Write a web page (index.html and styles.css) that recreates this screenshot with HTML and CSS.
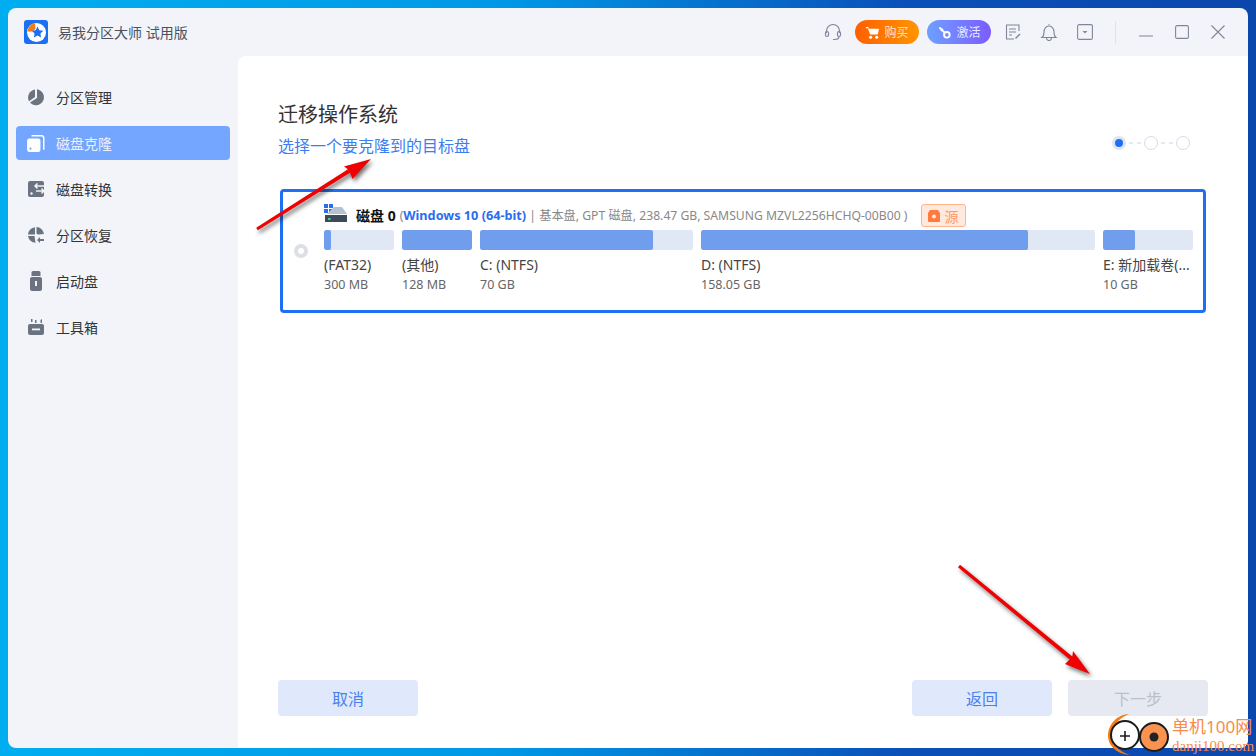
FILE: index.html
```html
<!DOCTYPE html>
<html lang="zh-CN">
<head>
    <meta charset="UTF-8">
    <title>易我分区大师 试用版</title>
    <link rel="stylesheet" href="styles.css">
</head>
<body>
    <div class="window">
        <header class="titlebar">
            <svg class="logo" viewBox="0 0 24 24">
                <rect width="24" height="24" rx="3" fill="#1b6ff2"/>
                <circle cx="12.5" cy="12.5" r="9.5" fill="#fff"/>
                <path d="M3.5 11.5A9.5 9.5 0 0 1 11 3.2L11.5 9 8 11.5Z" fill="#f57c14"/>
                <path d="M13.5 6.5l1.8 3.7 4 .5-2.9 2.8.7 4-3.6-1.9-3.6 1.9.7-4-2.9-2.8 4-.5Z" fill="#1b6ff2"/>
            </svg>
            <span class="app-name">易我分区大师 试用版</span>
            <div class="tools">
                <svg class="tool headset" viewBox="0 0 18 18" fill="none" stroke="#80869a" stroke-width="1.2">
                    <path d="M2.5 10V8a6.5 6.5 0 0 1 13 0v2"/>
                    <rect x="1.5" y="8.5" width="3" height="5" rx="1.5"/>
                    <rect x="13.5" y="8.5" width="3" height="5" rx="1.5"/>
                    <path d="M15 13.500c0 2-2 3-4.500 3H9"/>
                </svg>
                <div class="pill buy">
                    <svg viewBox="0 0 16 16" fill="#fff"><path d="M1 2h2.500l.6 2H15l-1.500 6H5.500L3 3.500H1Z"/><circle cx="6" cy="13" r="1.600"/><circle cx="12.500" cy="13" r="1.600"/></svg>
                    购买
                </div>
                <div class="pill activate">
                    <svg viewBox="0 0 16 16" fill="none" stroke="#fff" stroke-width="2"><circle cx="10.500" cy="10.500" r="3"/><path d="M8.500 8.500 2.500 2.500M4 6l2-2"/></svg>
                    激活
                </div>
                <svg class="tool note" viewBox="0 0 16 16" fill="none" stroke="#80869a" stroke-width="1.100">
                    <path d="M14 7V1H1.500v14H9"/><path d="M4 5h7M4 8h7M4 11h3"/><path d="M10 14l4.500-4.500 1 1L11 15Z" fill="#80869a" stroke="none"/>
                </svg>
                <svg class="tool bell" viewBox="0 0 18 18" fill="none" stroke="#80869a" stroke-width="1.100">
                    <path d="M2 14.500c1.500-1 2-2.500 2-5.500 0-3 2-6 5-6s5 3 5 6c0 3 .5 4.500 2 5.500Z"/><path d="M8.500 1.500h1"/><path d="M6.500 15a2.500 2.500 0 0 0 5 0"/>
                </svg>
                <svg class="tool menu" viewBox="0 0 16 16" fill="none" stroke="#80869a" stroke-width="1.100">
                    <rect x=".6" y=".6" width="14.800" height="14.800" rx="1.500"/><path d="M5.500 7h5L8 9.500Z" fill="#80869a" stroke="none"/>
                </svg>
                <span class="divider"></span>
                <svg class="win-btn" viewBox="0 0 14 14" fill="none" stroke="#80869a" stroke-width="1.100"><path d="M0 11h14"/></svg>
                <svg class="win-btn" viewBox="0 0 14 14" fill="none" stroke="#80869a" stroke-width="1.100"><rect x=".6" y=".6" width="12.800" height="12.800" rx="1.500"/></svg>
                <svg class="win-btn" viewBox="0 0 14 14" fill="none" stroke="#80869a" stroke-width="1.100"><path d="M.5.500l13 13M13.500.500l-13 13"/></svg>
            </div>
        </header>

        <div class="content">
            <nav class="sidebar">
                <a class="nav-item">
                    <svg viewBox="0 0 16 16" fill="#6b7280"><path d="M7 .6V8l-6 4.300A8 8 0 0 1 7 .6Z"/><path d="M9 .3a8 8 0 1 1-7 13.300L9 9Z"/></svg>
                    分区管理
                </a>
                <a class="nav-item active">
                    <svg viewBox="0 0 18 18" fill="#fff"><rect x="1" y="5" width="12" height="12" rx="2"/><path d="M5 2.500h9a2 2 0 0 1 2 2V15" fill="none" stroke="#fff" stroke-width="1.300"/><circle cx="4" cy="14" r="1" fill="#74a5ff"/></svg>
                    磁盘克隆
                </a>
                <a class="nav-item">
                    <svg viewBox="0 0 16 16"><path d="M2 0h12a2 2 0 0 1 2 2v12a2 2 0 0 1-2 2H2a2 2 0 0 1-2-2V2a2 2 0 0 1 2-2Z" fill="#6b7280"/><circle cx="3.500" cy="12.500" r="1.200" fill="#f2f4f9"/><path d="M7 5h9M16 10H8M9.500 2.500 7 5l2.500 2.500M13.500 7.500 16 10l-2.500 2.500" fill="none" stroke="#f2f4f9" stroke-width="1.500"/></svg>
                    磁盘转换
                </a>
                <a class="nav-item">
                    <svg viewBox="0 0 16 16" fill="#6b7280"><path d="M7 .2V7.500H0A8 8 0 0 1 7 .2Z"/><path d="M8.500 0A8 8 0 0 1 16 7l-6 .5-1.500-1Z"/><path d="M0 9h6.500l1 6.800A8 8 0 0 1 0 9Z"/><path d="M9 13l3-3v2h4v2h-4v2Z"/></svg>
                    分区恢复
                </a>
                <a class="nav-item">
                    <svg viewBox="2 0 12 20" fill="#6b7280"><path d="M5 0h6a1.500 1.500 0 0 1 1.500 1.500V5h-9V1.500A1.500 1.500 0 0 1 5 0Z"/><path d="M4 6h8a2 2 0 0 1 2 2v10a2 2 0 0 1-2 2H4a2 2 0 0 1-2-2V8a2 2 0 0 1 2-2Z"/><rect x="7" y="10" width="2" height="5" fill="#f2f4f9"/></svg>
                    启动盘
                </a>
                <a class="nav-item">
                    <svg viewBox="0 0 16 16" fill="#6b7280"><path d="M2 5h12a2 2 0 0 1 2 2v7a2 2 0 0 1-2 2H2a2 2 0 0 1-2-2V7a2 2 0 0 1 2-2Z"/><rect x="4" y="9.500" width="8" height="1.800" fill="#f2f4f9"/><path d="M3 0h1.500v3H3ZM7 1h1.500v3H7ZM12.500 1 14 0v4h-1.500Z"/></svg>
                    工具箱
                </a>
            </nav>

            <main class="main">
                <div class="page-head">
                    <div>
                        <h1 class="page-title">迁移操作系统</h1>
                        <p class="page-sub">选择一个要克隆到的目标盘</p>
                    </div>
                    <div class="steps">
                        <span class="step current"></span>
                        <span class="dash"></span>
                        <span class="step"></span>
                        <span class="dash"></span>
                        <span class="step"></span>
                    </div>
                </div>

                <section class="disk-card">
                    <span class="radio"></span>
                    <div class="disk-body">
                        <div class="disk-head">
                            <svg class="disk-icon" viewBox="0 0 24 19">
                                <rect x="0" y="0" width="4" height="4" fill="#2a6df0"/><rect x="5" y="0" width="4" height="4" fill="#2a6df0"/>
                                <rect x="0" y="5" width="4" height="4" fill="#2a6df0"/><rect x="5" y="5" width="4" height="4" fill="#2a6df0"/>
                                <path d="M10 3h8l5 7H3Z" fill="#b4c2d4"/>
                                <path d="M1 11h22v7H1Z" fill="#3c4a5c"/>
                                <rect x="4" y="14" width="2.500" height="2" fill="#3fd08a"/>
                            </svg>
                            <span class="disk-name">磁盘 0</span>
                            <span class="disk-info">(<b>Windows 10 (64-bit)</b> | 基本盘, GPT 磁盘, 238.47 GB, SAMSUNG MZVL2256HCHQ-00B00 )</span>
                            <span class="source-tag">
                                <svg viewBox="0 0 12 12"><path d="M2 0h8l2 3v8a1 1 0 0 1-1 1H1a1 1 0 0 1-1-1V3Z" fill="#ff7a3d"/><circle cx="6" cy="6.500" r="2" fill="#ffe9dc"/></svg>
                                源
                            </span>
                        </div>
                        <div class="partitions">
                            <div class="part" style="width: 70px">
                                <div class="bar"><div class="fill" style="width: 10%"></div></div>
                                <div class="part-name">(FAT32)</div>
                                <div class="part-size">300 MB</div>
                            </div>
                            <div class="part" style="width: 70px">
                                <div class="bar"><div class="fill" style="width: 100%"></div></div>
                                <div class="part-name">(其他)</div>
                                <div class="part-size">128 MB</div>
                            </div>
                            <div class="part" style="width: 213px">
                                <div class="bar"><div class="fill" style="width: 81%"></div></div>
                                <div class="part-name">C: (NTFS)</div>
                                <div class="part-size">70 GB</div>
                            </div>
                            <div class="part" style="width: 394px">
                                <div class="bar"><div class="fill" style="width: 83%"></div></div>
                                <div class="part-name">D: (NTFS)</div>
                                <div class="part-size">158.05 GB</div>
                            </div>
                            <div class="part" style="width: 90px">
                                <div class="bar"><div class="fill" style="width: 35%"></div></div>
                                <div class="part-name">E: 新加载卷(...</div>
                                <div class="part-size">10 GB</div>
                            </div>
                        </div>
                    </div>
                </section>

                <footer class="actions">
                    <button class="btn">取消</button>
                    <button class="btn back">返回</button>
                    <button class="btn disabled">下一步</button>
                </footer>
            </main>
        </div>
    </div>

    <!-- red arrows drawn over the screenshot -->
    <svg class="arrows" viewBox="0 0 1256 756">
        <path d="M256.200 227.700 348 169.300 344 166.500 371 159 352.500 179 350 172.700 257.800 230.300Z" fill="#f00000"/>
        <path d="M960 564.800 1072.300 656.500 1073 651 1090 674 1065 664 1069.700 659.500 958 567.200Z" fill="#f00000"/>
    </svg>

    <div class="watermark">
        <svg viewBox="0 0 64 42" class="wm-icon">
            <path d="M21 0C7 1 0 12 0 22c0 9 8 18 22 19-9-3-18-9-18-19C4 12 11 4 21 0Z" fill="#f57c14"/>
            <circle cx="17" cy="21" r="14" fill="#fff" stroke="#1b1b1b" stroke-width="2"/>
            <path d="M12 22h10M17 17v10" stroke="#1b1b1b" stroke-width="1.600"/>
            <circle cx="46" cy="23" r="14" fill="#f9934f" stroke="#1b1b1b" stroke-width="2"/>
            <circle cx="46" cy="23" r="4.500" fill="#222"/>
        </svg>
        <div class="wm-text">
            <div class="wm-cn">单机100网</div>
            <div class="wm-url">danji100.com</div>
        </div>
    </div>
</body>
</html>
```

FILE: styles.css
```css
body, html {
    margin: 0;
    padding: 0;
    height: 100%;
    overflow: hidden;
}

body {
    position: relative;
    background: linear-gradient(90deg, #00aef0, #0098e6 40%, #0a50b8 72%, #0a47ad);
    font-family: "Noto Sans", "Noto Sans CJK SC", sans-serif;
    color: #333;
}

.window {
    width: 1240px;
    height: 740px;
    margin: 8px;
    float: left;
    display: flex;
    flex-direction: column;
    background: #f2f4f9;
    border-radius: 8px;
    overflow: hidden;
}

/* title bar */
.titlebar {
    height: 48px;
    flex: none;
    display: flex;
    align-items: center;
    padding-left: 16px;
}

.logo {
    width: 24px;
    height: 24px;
    margin-right: 10px;
}

.app-name {
    font-size: 14px;
    color: #4a5160;
}

.tools {
    margin-left: auto;
    display: flex;
    align-items: center;
}

.tool {
    display: block;
}

.headset {
    width: 18px;
    height: 18px;
    margin-right: 13px;
}

.pill {
    width: 64px;
    height: 24px;
    border-radius: 12px;
    display: flex;
    align-items: center;
    justify-content: center;
    gap: 4px;
    font-size: 12px;
    margin-right: 8px;
}

.pill svg {
    width: 15px;
    height: 15px;
}

.buy {
    background: linear-gradient(90deg, #ff5f00, #ff9500);
    color: #ffe3cc;
}

.activate {
    background: linear-gradient(90deg, #6ea0ff, #7c5cff);
    color: #e4e8ff;
    margin-right: 14px;
}

.note {
    width: 16px;
    height: 16px;
    margin-right: 19px;
}

.bell {
    width: 18px;
    height: 18px;
    margin-right: 19px;
}

.menu {
    width: 16px;
    height: 16px;
    margin-right: 22px;
}

.divider {
    width: 1px;
    height: 23px;
    background: #e0e3ea;
    margin-right: 23px;
}

.win-btn {
    width: 14px;
    height: 14px;
    margin-right: 22px;
}

.win-btn:last-child {
    margin-right: 23px;
}

/* sidebar + page */
.content {
    flex: 1;
    display: flex;
    min-height: 0;
}

.sidebar {
    width: 230px;
    flex: none;
    box-sizing: border-box;
    padding: 24px 8px 0;
    display: flex;
    flex-direction: column;
    gap: 12px;
}

.nav-item {
    height: 34px;
    box-sizing: border-box;
    padding-left: 12px;
    display: flex;
    align-items: center;
    gap: 12px;
    border-radius: 4px;
    font-size: 14px;
    color: #333;
}

.nav-item svg {
    width: 16px;
    height: 20px;
}

.nav-item.active {
    background: #74a5ff;
    color: #eaf1ff;
}

.nav-item.active svg {
    width: 20px;
    margin: 0 -2px;
}

.main {
    flex: 1;
    min-width: 0;
    display: flex;
    flex-direction: column;
    background: #fff;
    border-top-left-radius: 8px;
    padding: 45px 40px 32px;
}

.page-head {
    display: flex;
    justify-content: space-between;
    align-items: flex-end;
}

.page-title {
    margin: 0;
    font-size: 20px;
    line-height: 28px;
    font-weight: 400;
    color: #333;
}

.page-sub {
    margin: 5px 0 0;
    font-size: 16px;
    line-height: 24px;
    color: #3d7df2;
}

.steps {
    display: flex;
    align-items: center;
    margin: 0 18px 8px 0;
}

.step {
    width: 14px;
    height: 14px;
    box-sizing: border-box;
    border: 1px solid #d5dbe8;
    border-radius: 50%;
}

.step.current {
    background: #1f6ff5;
    border: 3px solid #e0e4ef;
}

.dash {
    width: 12px;
    height: 2px;
    margin: 0 3px;
    background: linear-gradient(90deg, #e6e9f0 4px, transparent 4px) 0 0 / 8px 2px;
}

/* disk card */
.disk-card {
    margin: 31px 2px 0;
    height: 124px;
    box-sizing: border-box;
    border: 3px solid #1f6ff5;
    border-radius: 4px;
    padding: 0 10px 0 11px;
    display: flex;
    align-items: center;
    gap: 16px;
}

.radio {
    width: 14px;
    height: 14px;
    box-sizing: border-box;
    border: 4px solid #dcdfe6;
    border-radius: 50%;
    flex: none;
}

.disk-body {
    flex: 1;
    min-width: 0;
    align-self: flex-start;
    padding-top: 12px;
}

.disk-head {
    height: 23px;
    display: flex;
    align-items: center;
}

.disk-icon {
    width: 24px;
    height: 19px;
    margin-right: 8px;
    position: relative;
    top: -2px;
}

.disk-name {
    font-size: 14px;
    font-weight: 700;
    color: #111;
    margin: 0 4px 2px 0;
}

.disk-info {
    font-size: 12.2px;
    color: #888;
    margin-bottom: 2px;
}

.disk-info b {
    font-size: 12.7px;
    color: #2a6df0;
}

.source-tag {
    margin-left: 13px;
    width: 45px;
    height: 23px;
    box-sizing: border-box;
    display: flex;
    align-items: center;
    justify-content: center;
    gap: 5px;
    background: #ffe9dc;
    border: 1px solid #ffb48c;
    border-radius: 3px;
    font-size: 14px;
    color: #ff9a66;
}

.source-tag svg {
    width: 12px;
    height: 12px;
}

.partitions {
    display: flex;
    gap: 8px;
    margin-top: 3px;
}

.bar {
    height: 20px;
    background: #e0e7f5;
    border-radius: 2px;
    overflow: hidden;
}

.fill {
    height: 100%;
    background: #709eec;
    border-radius: 2px;
}

.part-name {
    margin-top: 5px;
    font-size: 14px;
    line-height: 20px;
    color: #444;
    white-space: nowrap;
}

.part-size {
    font-size: 12.5px;
    line-height: 20px;
    color: #666;
}

/* footer buttons */
.actions {
    margin-top: auto;
    display: flex;
    gap: 16px;
}

.btn {
    width: 140px;
    height: 36px;
    border: none;
    border-radius: 4px;
    background: #e0e8fb;
    color: #4a80ee;
    font-family: inherit;
    font-size: 16px;
}

.btn.back {
    margin-left: auto;
}

.btn.disabled {
    background: #e6e9f2;
    color: #bcbfc8;
}

/* overlays */
.arrows {
    position: absolute;
    left: 0;
    top: 0;
    width: 1256px;
    height: 756px;
    filter: drop-shadow(2px 3px 2px rgba(0, 0, 0, 0.55));
    pointer-events: none;
}

.watermark {
    position: absolute;
    left: 1108px;
    top: 714px;
    width: 148px;
    height: 42px;
    display: flex;
}

.wm-icon {
    width: 64px;
    height: 42px;
    flex: none;
}

.wm-text {
    padding-top: 2px;
    white-space: nowrap;
    color: #f98b4a;
    font-family: "Liberation Serif", "Noto Sans CJK SC", serif;
}

.wm-cn {
    font-size: 17px;
    line-height: 22px;
    font-family: "Noto Sans", "Noto Sans CJK SC", sans-serif;
}

.wm-url {
    font-size: 15px;
    line-height: 16px;
}
```
